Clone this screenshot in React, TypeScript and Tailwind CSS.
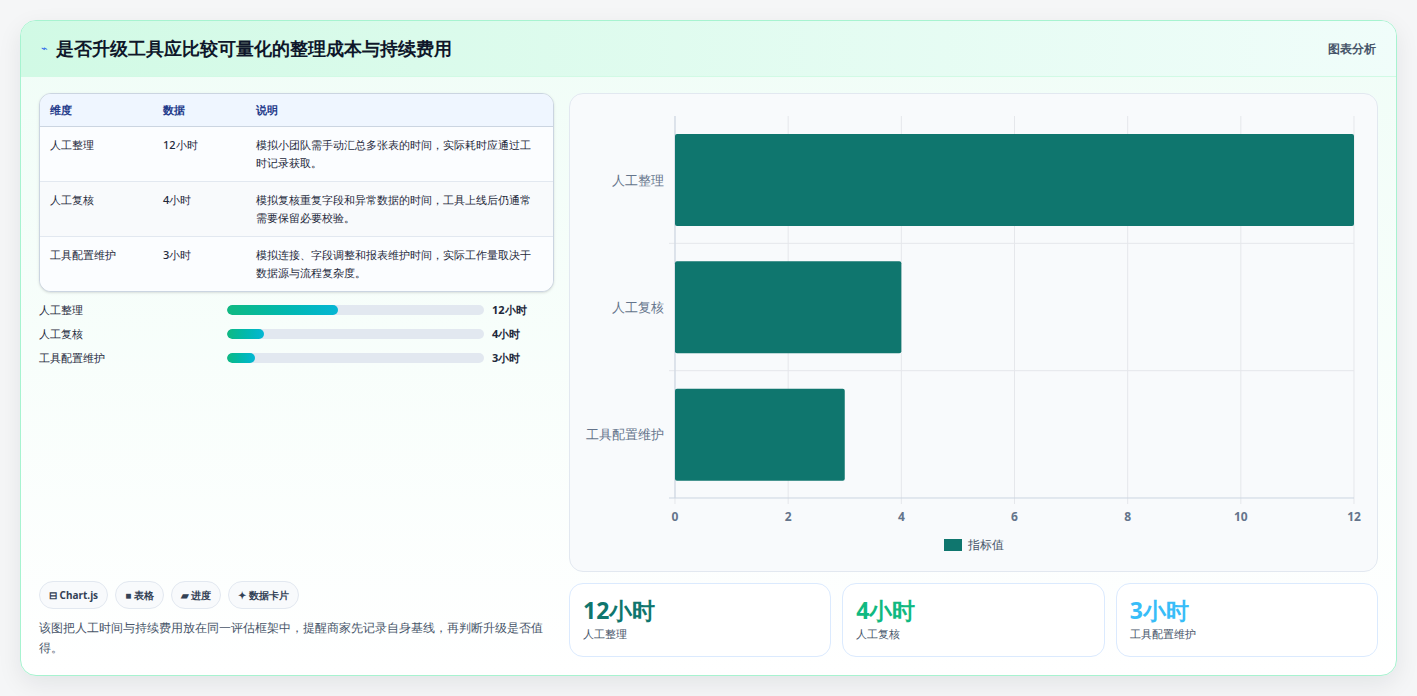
import React from 'react';

const rows = [
  { name: '人工整理', value: 12, desc: '模拟小团队需手动汇总多张表的时间，实际耗时应通过工时记录获取。' },
  { name: '人工复核', value: 4, desc: '模拟复核重复字段和异常数据的时间，工具上线后仍通常需要保留必要校验。' },
  { name: '工具配置维护', value: 3, desc: '模拟连接、字段调整和报表维护时间，实际工作量取决于数据源与流程复杂度。' },
];

function Chart() {
  const x0 = 105, x1 = 784, y0 = 22, y1 = 404;
  const sx = (v: number) => x0 + ((x1 - x0) * v) / 12;
  const rowH = (y1 - y0) / 3;
  return (
    <svg width="807" height="479" className="block">
      {[0, 2, 4, 6, 8, 10, 12].map((t) => (
        <g key={t}>
          <line x1={sx(t)} x2={sx(t)} y1={y0} y2={y1 + 6} stroke="#e5e7eb" />
          <text x={sx(t)} y={427} textAnchor="middle" fontSize="12" fontWeight="700" fill="#64748b">{t}</text>
        </g>
      ))}
      {[1, 2].map((i) => (
        <line key={i} x1={x0 - 6} x2={x1} y1={y0 + rowH * i} y2={y0 + rowH * i} stroke="#e5e7eb" />
      ))}
      <line x1={x0} x2={x0} y1={y0} y2={y1} stroke="#cbd5e1" />
      <line x1={x0 - 6} x2={x1} y1={y1} y2={y1} stroke="#cbd5e1" />
      {rows.map((r, i) => {
        const top = y0 + rowH * i + 18;
        return (
          <g key={r.name}>
            <rect x={x0} y={top} width={sx(r.value) - x0} height={92} rx="2" fill="#0f766e" />
            <text x={94} y={y0 + rowH * i + rowH / 2 + 5} textAnchor="end" fontSize="13" fill="#64748b">{r.name}</text>
          </g>
        );
      })}
      <rect x={374} y={445} width={18} height={12} fill="#0f766e" />
      <text x={398} y={455} fontSize="12" fill="#475569">指标值</text>
    </svg>
  );
}

export default function App() {
  const colors = ['text-[#0f766e]', 'text-[#10b981]', 'text-[#38bdf8]'];
  const widths = ['w-[43%]', 'w-[14.5%]', 'w-[11%]'];
  return (
    <div className="min-h-[696px] bg-[#f5f6f7] pt-[20px] px-[20px] font-['Noto_Sans_CJK_SC','Noto_Sans',sans-serif] text-[#1e293b]">
      <div className="w-[1377px] h-[656px] rounded-[16px] border border-[#a7f3d0] bg-gradient-to-b from-[#f0fdf7] to-white shadow-[0_8px_24px_rgba(15,23,42,0.08)] overflow-hidden flex flex-col">
        <div className="h-[56px] shrink-0 flex items-center justify-between px-[20px] bg-gradient-to-r from-[#d1fae5] to-[#f0fdfa] border-b border-[#d1fae5]">
          <div className="flex items-center gap-[8px]">
            <span className="text-[#2563eb] text-[11px]">⌁</span>
            <h1 className="text-[18px] font-bold text-[#0f172a]">是否升级工具应比较可量化的整理成本与持续费用</h1>
          </div>
          <span className="text-[12px] font-bold text-[#475569]">图表分析</span>
        </div>
        <div className="flex-1 flex gap-[15px] px-[18px] pt-[16px] pb-[17px]">
          <div className="w-[517px] flex flex-col">
            <div className="rounded-[12px] border border-[#cbd5e1] bg-[#f8fafc] overflow-hidden shadow-sm">
              <div className="flex h-[33px] items-center bg-[#eff6ff] border-b border-[#cbd5e1] text-[11px] font-bold text-[#1e3a8a]">
                <div className="w-[123px] pl-[10px]">维度</div>
                <div className="w-[93px]">数据</div>
                <div>说明</div>
              </div>
              {rows.map((r, i) => (
                <div key={r.name} className={`flex py-[9px] text-[11px] font-medium leading-[18px] ${i ? 'border-t border-[#e2e8f0]' : ''} ${i === 1 ? 'bg-[#f8fafc]' : 'bg-[#fbfdff]'}`}>
                  <div className="w-[123px] pl-[10px]">{r.name}</div>
                  <div className="w-[93px]">{r.value}小时</div>
                  <div className="w-[280px]">{r.desc}</div>
                </div>
              ))}
            </div>
            <div className="mt-[10px] flex flex-col gap-[8px]">
              {rows.map((r, i) => (
                <div key={r.name} className="flex items-center h-[16px] text-[11px] font-medium">
                  <div className="w-[188px]">{r.name}</div>
                  <div className="w-[257px] h-[10px] rounded-full bg-[#e2e8f0] overflow-hidden">
                    <div className={`h-full rounded-full bg-gradient-to-r from-[#10b981] to-[#06b6d4] ${widths[i]}`} />
                  </div>
                  <div className="ml-[8px] font-bold">{r.value}小时</div>
                </div>
              ))}
            </div>
            <div className="mt-auto flex gap-[7px]">
              {['⊟ Chart.js', '■ 表格', '▰ 进度', '✦ 数据卡片'].map((t) => (
                <span key={t} className="h-[28px] px-[9px] rounded-full border border-[#e2e8f0] bg-[#f8fafc] text-[10px] font-bold text-[#334155] flex items-center">{t}</span>
              ))}
            </div>
            <p className="mt-[9px] text-[12px] leading-[20px] font-medium text-[#475569]">该图把人工时间与持续费用放在同一评估框架中，提醒商家先记录自身基线，再判断升级是否值得。</p>
          </div>
          <div className="flex-1 flex flex-col gap-[11px]">
            <div className="h-[479px] rounded-[14px] border border-[#e2e8f0] bg-[#f8fafc] overflow-hidden">
              <Chart />
            </div>
            <div className="flex gap-[11px]">
              {rows.map((r, i) => (
                <div key={r.name} className="flex-1 h-[74px] rounded-[14px] border border-[#dbeafe] bg-white px-[13px] pt-[10px]">
                  <div className={`text-[23px] font-bold leading-[32px] ${colors[i]}`}>{r.value}小时</div>
                  <div className="text-[11px] font-medium text-[#475569]">{r.name}</div>
                </div>
              ))}
            </div>
          </div>
        </div>
      </div>
    </div>
  );
}
